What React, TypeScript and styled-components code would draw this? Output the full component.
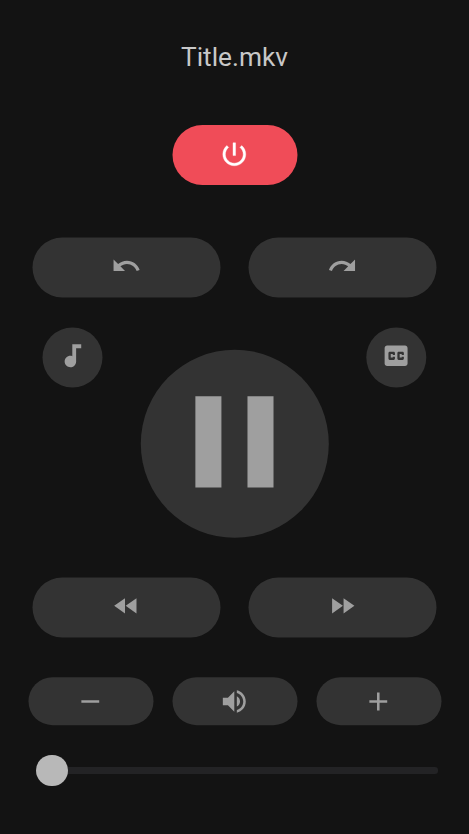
import React from "react";
import styled, { createGlobalStyle } from "styled-components";

const GlobalStyle = createGlobalStyle`
  * { box-sizing: border-box; }
  html, body { margin: 0; background: #131313; }
  body { font-family: Roboto, "Liberation Sans", sans-serif; }
`;

const Remote = styled.main`
  width: 469px;
  height: 834px;
  overflow: hidden;
  background: #131313;
  display: flex;
  flex-direction: column;
`;

const Title = styled.h1`
  margin: 41px 0 0;
  height: 32px;
  line-height: 32px;
  font-size: 26.25px;
  font-weight: 400;
  text-align: center;
  color: #c8c8c8;
`;

const Row = styled.div<{ $top: number; $gap?: number }>`
  display: flex;
  justify-content: center;
  margin-top: ${(p) => p.$top}px;
  padding-right: 1px;
  gap: ${(p) => p.$gap ?? 0}px;
`;

const Button = styled.button<{ $w: number; $h: number; $danger?: boolean; $lift?: number; $dx?: number; $dy?: number }>`
  flex: none;
  width: ${(p) => p.$w}px;
  height: ${(p) => p.$h}px;
  padding: 0 0 ${(p) => p.$lift ?? 0}px;
  border: 0;
  border-radius: ${(p) => (p.$w === p.$h ? "50%" : "31.25px")};
  background: ${(p) => (p.$danger ? "#f04c58" : "#333333")};
  color: ${(p) => (p.$danger ? "#ffffff" : "#9f9f9f")};
  display: flex;
  align-items: center;
  justify-content: center;
  transform: translate(${(p) => p.$dx ?? 0.5}px, ${(p) => p.$dy ?? 0.5}px);
`;

const Center = styled.section`
  display: flex;
  justify-content: space-between;
  align-items: flex-start;
  margin-top: 30px;
  padding: 0 43px 0 42px;
`;

const PlaySlot = styled.div`
  margin: 23px 0 0 2px;
`;

const Slider = styled.div`
  display: flex;
  align-items: center;
  margin: 30px 31px 0 36px;
  height: 31px;
`;

const Thumb = styled.div`
  flex: none;
  position: relative;
  z-index: 1;
  width: 31.5px;
  height: 31.5px;
  border-radius: 50%;
  background: #b8b8b8;
`;

const Track = styled.div`
  flex: 1;
  height: 7px;
  margin-left: -4px;
  border-radius: 0 3px 3px 0;
  background: #232325;
`;

const Glyph = styled.svg<{ $size: number; $weight: number }>`
  flex: none;
  display: block;
  width: ${(p) => p.$size}px;
  height: ${(p) => p.$size}px;
  fill: currentColor;
  stroke: currentColor;
  stroke-width: ${(p) => p.$weight};
  transform: translateX(-0.5px);
`;

const paths = {
  power:
    "M13 3h-2v10h2V3zm4.83 2.17l-1.42 1.42C17.99 7.86 19 9.81 19 12c0 3.87-3.13 7-7 7s-7-3.13-7-7c0-2.19 1.01-4.14 2.58-5.42L6.17 5.17C4.23 6.82 3 9.26 3 12c0 4.97 4.03 9 9 9s9-4.03 9-9c0-2.74-1.23-5.18-3.17-6.83z",
  undo: "M12.5 8c-2.65 0-5.05.99-6.9 2.6L2 7v9h9l-3.62-3.62c1.39-1.16 3.16-1.88 5.12-1.88 3.54 0 6.55 2.31 7.6 5.5l2.37-.78C21.08 11.03 17.15 8 12.5 8z",
  redo: "M18.4 10.6C16.55 8.99 14.15 8 11.5 8c-4.65 0-8.58 3.03-9.96 7.22L3.9 16c1.05-3.19 4.05-5.5 7.6-5.5 1.95 0 3.73.72 5.12 1.88L13 16h9V7l-3.6 3.6z",
  audio:
    "M12 3v9.28c-.47-.17-.97-.28-1.5-.28C8.01 12 6 14.01 6 16.5S8.01 21 10.5 21c2.31 0 4.2-1.75 4.45-4H15V6h4V3h-7z",
  captions:
    "M19 4H5c-1.11 0-2 .9-2 2v12c0 1.1.89 2 2 2h14c1.1 0 2-.9 2-2V6c0-1.1-.9-2-2-2zm-7.9 7.3H9.4v-.7H7.8v2.8h1.6v-.7h1.7v1.4c0 .6-.45 1.1-1 1.1H7c-.55 0-1-.5-1-1.1V9.9c0-.6.45-1.1 1-1.1h3.1c.55 0 1 .5 1 1.1v1.4zm7 0h-1.7v-.7h-1.6v2.8h1.6v-.7h1.7v1.4c0 .6-.45 1.1-1 1.1H14c-.55 0-1-.5-1-1.1V9.9c0-.6.45-1.1 1-1.1h3.1c.55 0 1 .5 1 1.1v1.4z",
  pause: "M6 19h4V5H6v14zm8-14v14h4V5h-4z",
  rewind: "M11 18V6l-8.5 6 8.5 6zm.5-6l8.5 6V6l-8.5 6z",
  forward: "M4 18l8.5-6L4 6v12zm9-12v12l8.5-6L13 6z",
  minus: "M19 13H5v-2h14v2z",
  volume:
    "M3 9v6h4l5 5V4L7 9H3zm13.5 3c0-1.77-1.02-3.29-2.5-4.03v8.05c1.48-.73 2.5-2.25 2.5-4.02zM14 3.23v2.06c2.89.86 5 3.54 5 6.71s-2.11 5.85-5 6.71v2.06c4.01-.91 7-4.49 7-8.77s-2.99-7.86-7-8.77z",
  plus: "M19 13h-6v6h-2v-6H5v-2h6V5h2v6h6v2z",
};

function Icon({ name, size = 30.6, weight = 0 }: { name: keyof typeof paths; size?: number; weight?: number }) {
  return (
    <Glyph $size={size} $weight={weight} viewBox="0 0 24 24" aria-hidden="true">
      <path d={paths[name]} />
    </Glyph>
  );
}

export default function App() {
  return (
    <>
      <GlobalStyle />
      <Remote>
        <Title>Title.mkv</Title>
        <Row $top={52}>
          <Button $w={125} $h={60} $danger $lift={2} $dy={0} aria-label="Power">
            <Icon name="power" weight={0.3} />
          </Button>
        </Row>
        <Row $top={52} $gap={28}>
          <Button $w={188} $h={60} $lift={3} aria-label="Undo">
            <Icon name="undo" />
          </Button>
          <Button $w={188} $h={60} $lift={3} aria-label="Redo">
            <Icon name="redo" />
          </Button>
        </Row>
        <Center>
          <Button $w={60} $h={60} $lift={3} aria-label="Audio track">
            <Icon name="audio" />
          </Button>
          <PlaySlot>
            <Button $w={188} $h={188} $lift={3.6} $dx={-0.2} $dy={-0.2} aria-label="Pause">
              <Icon name="pause" size={156.3} />
            </Button>
          </PlaySlot>
          <Button $w={60} $h={60} $lift={3} $dx={0.3} aria-label="Subtitles">
            <Icon name="captions" />
          </Button>
        </Center>
        <Row $top={39} $gap={28}>
          <Button $w={188} $h={60} $lift={3} aria-label="Rewind">
            <Icon name="rewind" />
          </Button>
          <Button $w={188} $h={60} $lift={3} aria-label="Forward">
            <Icon name="forward" />
          </Button>
        </Row>
        <Row $top={40} $gap={19}>
          <Button $w={125} $h={48} $dy={0.2} aria-label="Volume down">
            <Icon name="minus" />
          </Button>
          <Button $w={125} $h={48} $dy={0.2} aria-label="Mute">
            <Icon name="volume" />
          </Button>
          <Button $w={125} $h={48} $dy={0.2} aria-label="Volume up">
            <Icon name="plus" />
          </Button>
        </Row>
        <Slider>
          <Thumb />
          <Track />
        </Slider>
      </Remote>
    </>
  );
}
